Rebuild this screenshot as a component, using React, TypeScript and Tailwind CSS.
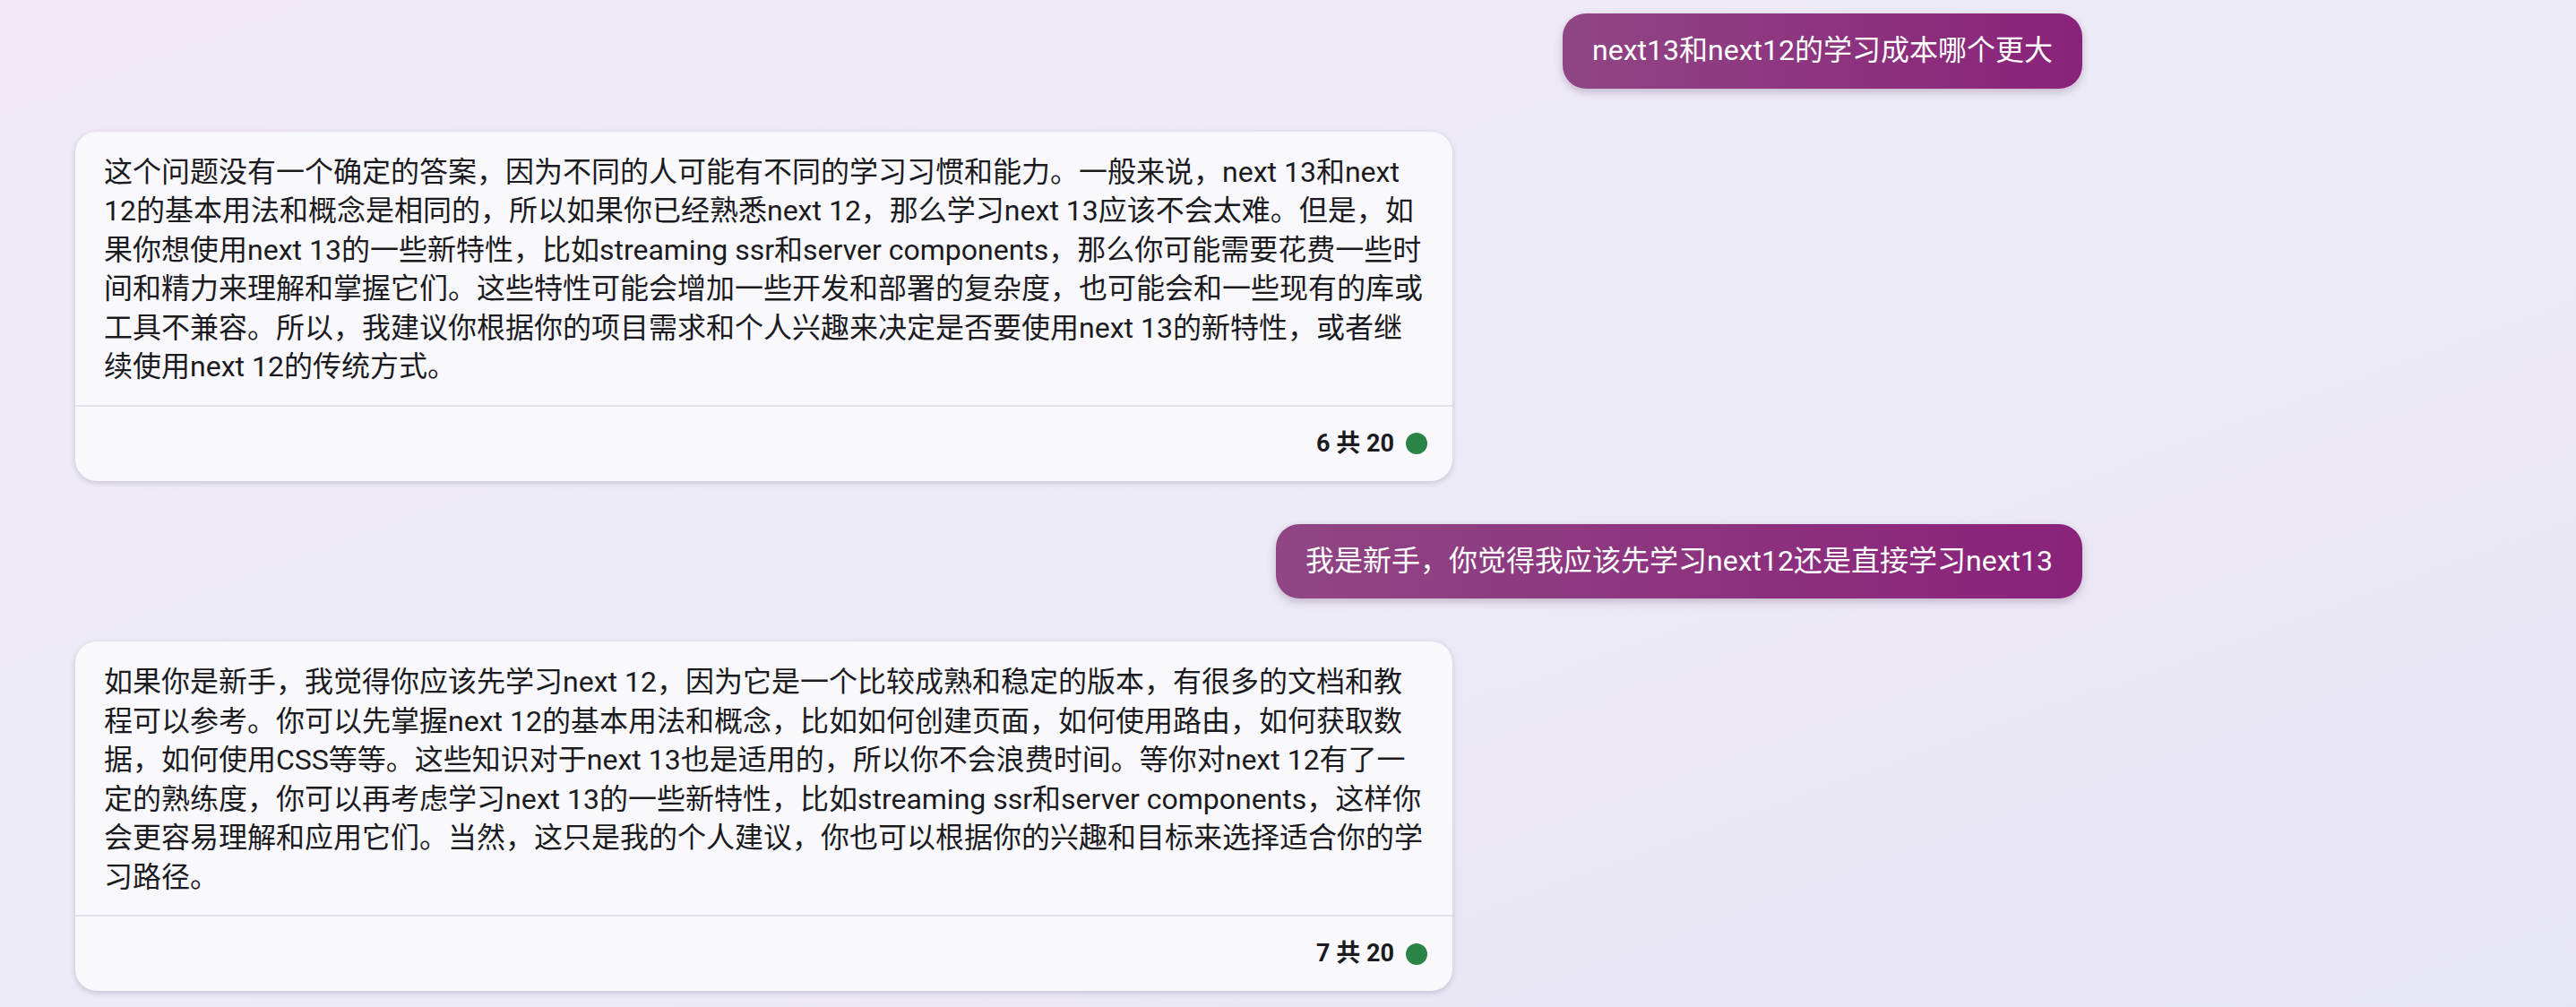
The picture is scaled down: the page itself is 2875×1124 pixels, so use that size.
import React from 'react';

const messages = [
  {
    role: 'user',
    text: 'next13和next12的学习成本哪个更大',
  },
  {
    role: 'bot',
    text: '这个问题没有一个确定的答案，因为不同的人可能有不同的学习习惯和能力。一般来说，next 13和next 12的基本用法和概念是相同的，所以如果你已经熟悉next 12，那么学习next 13应该不会太难。但是，如果你想使用next 13的一些新特性，比如streaming ssr和server components，那么你可能需要花费一些时间和精力来理解和掌握它们。这些特性可能会增加一些开发和部署的复杂度，也可能会和一些现有的库或工具不兼容。所以，我建议你根据你的项目需求和个人兴趣来决定是否要使用next 13的新特性，或者继续使用next 12的传统方式。',
    index: 6,
  },
  {
    role: 'user',
    text: '我是新手，你觉得我应该先学习next12还是直接学习next13',
  },
  {
    role: 'bot',
    text: '如果你是新手，我觉得你应该先学习next 12，因为它是一个比较成熟和稳定的版本，有很多的文档和教程可以参考。你可以先掌握next 12的基本用法和概念，比如如何创建页面，如何使用路由，如何获取数据，如何使用CSS等等。这些知识对于next 13也是适用的，所以你不会浪费时间。等你对next 12有了一定的熟练度，你可以再考虑学习next 13的一些新特性，比如streaming ssr和server components，这样你会更容易理解和应用它们。当然，这只是我的个人建议，你也可以根据你的兴趣和目标来选择适合你的学习路径。',
    index: 7,
  },
];

const UserBubble = ({ text }: { text: string }) => (
  <div className="flex justify-end">
    <div className="rounded-[26px] bg-[linear-gradient(90deg,#904684,#8a227a)] px-[33px] py-[20px] text-[32px] leading-[43.5px] text-white shadow-[0_4px_10px_rgba(80,40,90,0.25)]">
      {text}
    </div>
  </div>
);

const BotCard = ({ text, index }: { text: string; index: number }) => (
  <div className="flex justify-start">
    <div className="w-[1537px] rounded-[24px] bg-[#f9f8fc] shadow-[0_2px_6px_rgba(60,50,90,0.22)]">
      <div className="px-[32px] pt-[24px] pb-[20px] text-[32px] leading-[43.5px] text-[#1b1b1f]">
        {text}
      </div>
      <div className="flex h-[85px] items-center justify-end gap-[13px] border-t-2 border-[#e3e1e8] pr-[28px]">
        <span className="text-[27px] font-bold text-[#1b1b1f]">{index} 共 20</span>
        <span className="h-[24px] w-[24px] rounded-full bg-[#2b8447]" />
      </div>
    </div>
  </div>
);

export default function App() {
  return (
    <div
      className="h-[1124px] overflow-hidden bg-[linear-gradient(160deg,#f0e8f7_0%,#ecebf6_45%,#ebe8f4_70%,#e6e5f6_100%)] pt-[15px] pl-[84px] pr-[551px]"
      style={{ fontFamily: "Roboto, 'Noto Sans CJK SC', sans-serif" }}
    >
      <div className="flex flex-col gap-[48px]">
        {messages.map((m, i) =>
          m.role === 'user' ? (
            <UserBubble key={i} text={m.text} />
          ) : (
            <BotCard key={i} text={m.text} index={m.index ?? 0} />
          )
        )}
      </div>
    </div>
  );
}
